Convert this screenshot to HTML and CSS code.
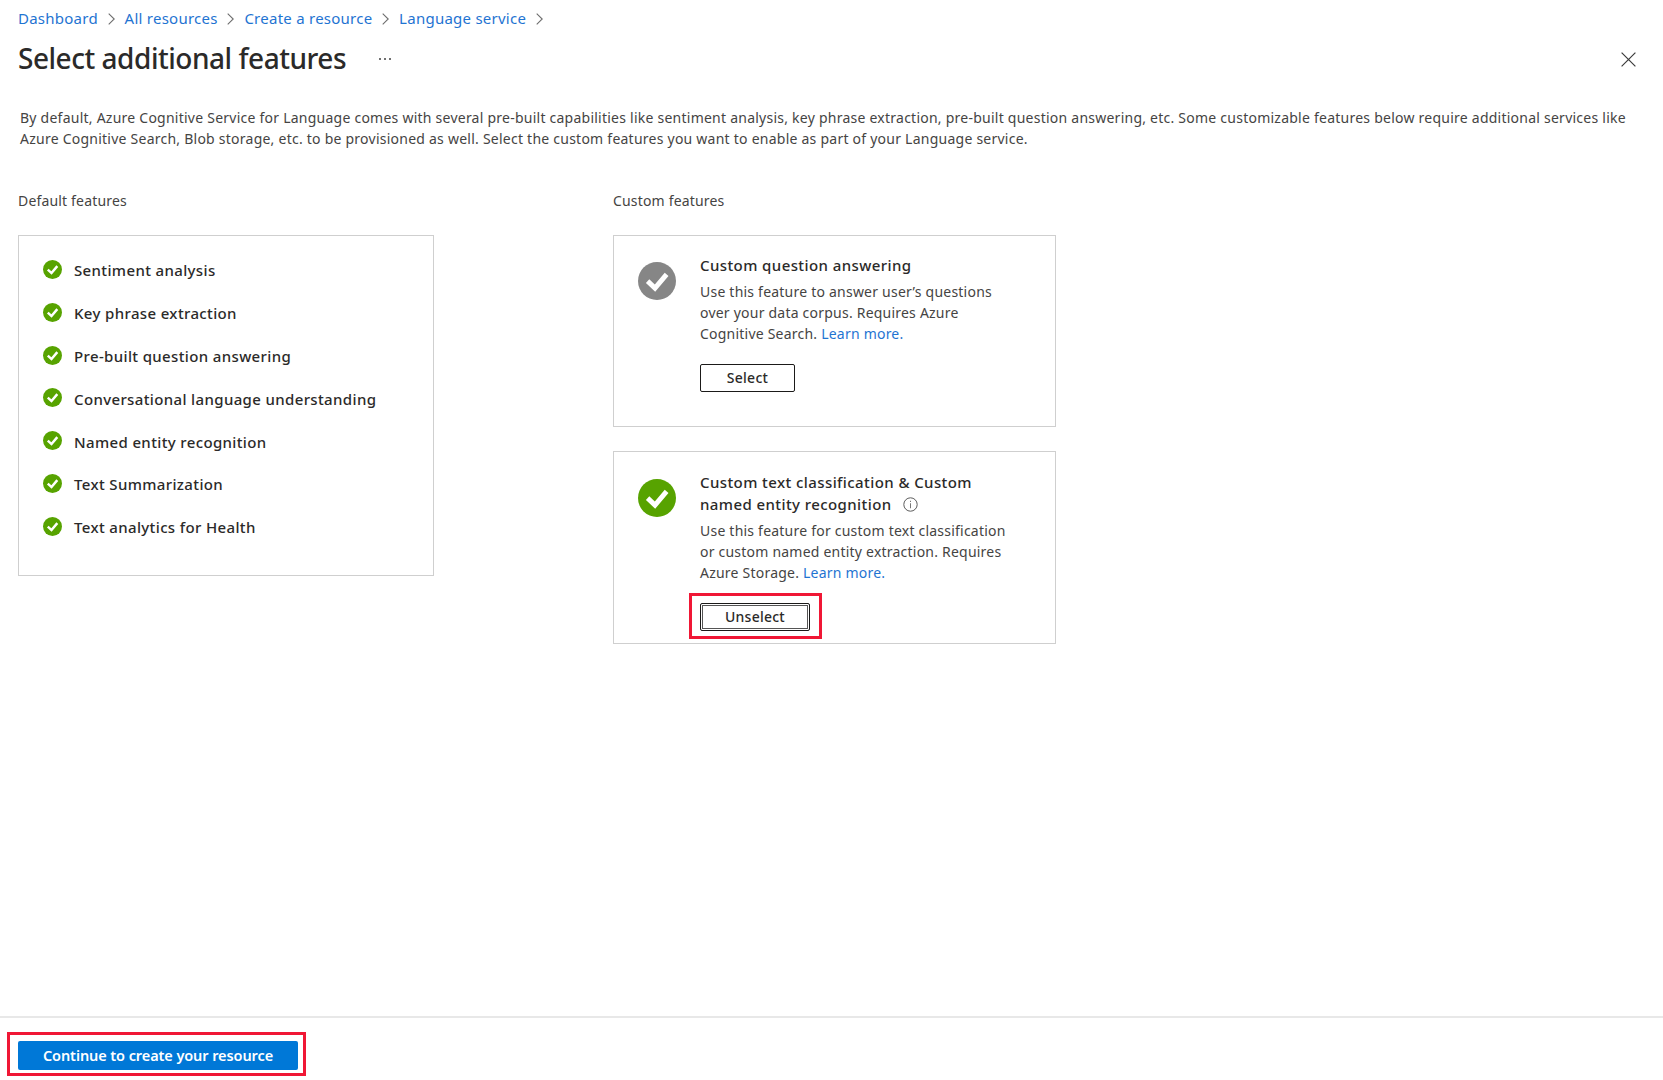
FILE: index.html
```
<!DOCTYPE html>
<html lang="en">
<head>
<meta charset="utf-8">
<title>Select additional features</title>
<link rel="stylesheet" href="styles.css">
</head>
<body>
<svg class="sprite" aria-hidden="true">
  <symbol id="check" viewBox="0 0 38 38"><circle cx="19" cy="19" r="19"/><path d="M9.6 19.1 17 26.1 28.6 12.3" fill="none" stroke="#fff" stroke-width="4.9"/></symbol>
  <symbol id="chevron" viewBox="0 0 7 12"><path d="M.7.6 6.2 6 .7 11.4" fill="none" stroke="#6e6e6e" stroke-width="1.1"/></symbol>
</svg>
<div class="page">
  <nav class="breadcrumb">
    <a>Dashboard</a><svg class="chevron"><use href="#chevron"/></svg>
    <a>All resources</a><svg class="chevron"><use href="#chevron"/></svg>
    <a>Create a resource</a><svg class="chevron"><use href="#chevron"/></svg>
    <a>Language service</a><svg class="chevron"><use href="#chevron"/></svg>
  </nav>
  <header class="header">
    <h1 class="title">Select additional features</h1>
    <svg class="more" viewBox="0 0 14 4"><path d="M1 1h2v2H1zM6 1h2v2H6zM11 1h2v2h-2z" fill="#707070"/></svg>
    <svg class="close" viewBox="0 0 15 15"><path d="M.6.6 14.4 14.4M14.4.6.6 14.4" stroke="#3c3c3c" stroke-width="1.2"/></svg>
  </header>
  <p class="intro">By default, Azure Cognitive Service for Language comes with several pre-built capabilities like sentiment analysis, key phrase extraction, pre-built question answering, etc. Some customizable features below require additional services like<br>Azure Cognitive Search, Blob storage, etc. to be provisioned as well. Select the custom features you want to enable as part of your Language service.</p>
  <main class="columns">
    <section class="defaults">
      <h2 class="label">Default features</h2>
      <ul class="list">
        <li><svg class="tick"><use href="#check"/></svg><span>Sentiment analysis</span></li>
        <li><svg class="tick"><use href="#check"/></svg><span>Key phrase extraction</span></li>
        <li><svg class="tick"><use href="#check"/></svg><span>Pre-built question answering</span></li>
        <li><svg class="tick"><use href="#check"/></svg><span>Conversational language understanding</span></li>
        <li><svg class="tick"><use href="#check"/></svg><span>Named entity recognition</span></li>
        <li><svg class="tick"><use href="#check"/></svg><span>Text Summarization</span></li>
        <li><svg class="tick"><use href="#check"/></svg><span>Text analytics for Health</span></li>
      </ul>
    </section>
    <section class="customs">
      <h2 class="label">Custom features</h2>
      <article class="card">
        <svg class="badge badge-off"><use href="#check"/></svg>
        <div>
          <h3 class="card-title">Custom question answering</h3>
          <p class="card-text">Use this feature to answer user’s questions<br>over your data corpus. Requires Azure<br>Cognitive Search. <a>Learn more.</a></p>
          <button class="button">Select</button>
        </div>
      </article>
      <article class="card">
        <svg class="badge"><use href="#check"/></svg>
        <div>
          <h3 class="card-title">Custom text classification &amp; Custom<br>named entity recognition<svg class="info" viewBox="0 0 15 15"><circle cx="7.5" cy="7.5" r="6.7" fill="none" stroke="#5c5c5c"/><path d="M7 6.2h1v5H7zM7 3.8h1v1.2H7z" fill="#777"/></svg></h3>
          <p class="card-text">Use this feature for custom text classification<br>or custom named entity extraction. Requires<br>Azure Storage. <a>Learn more.</a></p>
          <div class="highlight highlight-card"><button class="button button-focus">Unselect</button></div>
        </div>
      </article>
    </section>
  </main>
  <footer class="footer">
    <div class="highlight highlight-footer"><button class="primary">Continue to create your resource</button></div>
  </footer>
</div>
</body>
</html>
```
FILE: styles.css
```
* { box-sizing: border-box; }
body, h1, h2, h3, p, ul { margin: 0; padding: 0; }
body {
  background: #fff;
  color: #454443;
  font: 400 14px/21px "Noto Sans", "Open Sans", sans-serif;
}
svg { display: block; flex: none; }
a { color: #1f74d2; }
.sprite { position: absolute; width: 0; height: 0; }
.page { display: flex; flex-direction: column; height: 1080px; overflow: hidden; }

.breadcrumb {
  display: flex;
  align-items: center;
  height: 36px;
  padding-left: 18px;
  font-size: 15px;
  letter-spacing: .25px;
}
.chevron { width: 7px; height: 12px; margin: 2px 10px 0 9.7px; }
.breadcrumb a { white-space: nowrap; }

.header { display: flex; align-items: center; height: 43px; padding: 1px 27px 0 18px; }
.title {
  padding-bottom: 1px;
  color: #2b2a29;
  font-size: 28px;
  font-weight: 500;
  line-height: 40px;
  letter-spacing: -.47px;
  white-space: nowrap;
}
.more { width: 14px; height: 4px; margin: 2px auto 0 31.5px; }
.close { width: 15px; height: 15px; margin-top: 2px; }

.intro {
  margin: 28px 0 0 20px;
  letter-spacing: .241px;
  white-space: nowrap;
}

.columns { display: flex; gap: 179px; flex: 1; padding: 41px 0 0 18px; }
.label { height: 45px; font-size: 14px; font-weight: 400; letter-spacing: .17px; }
.defaults { width: 416px; }
.customs { width: 443px; }

.list {
  height: 341px;
  padding: 12px 0 0 24px;
  border: 1px solid #cfcfcf;
  list-style: none;
}
.list li {
  display: flex;
  align-items: center;
  gap: 12px;
  height: 42.85px;
  color: #2b2a29;
  font-size: 15px;
  font-weight: 500;
  letter-spacing: .36px;
}
.list span { padding-top: 2.5px; }
.tick { width: 19px; height: 19px; fill: #57a300; }

.card {
  display: flex;
  gap: 24px;
  height: 192px;
  padding: 18px 0 0 24px;
  border: 1px solid #cfcfcf;
}
.card + .card { height: 193px; margin-top: 24px; padding-top: 19px; }
.badge { width: 38px; height: 38px; margin-top: 8px; fill: #57a300; }
.badge-off { fill: #868686; }
.card-title {
  margin-bottom: 5px;
  color: #2b2a29;
  font-size: 15px;
  font-weight: 500;
  line-height: 22px;
  letter-spacing: .41px;
  white-space: nowrap;
}
.info { display: inline-block; width: 15px; height: 15px; margin-left: 11px; vertical-align: -2px; }
.card-text { letter-spacing: .22px; white-space: nowrap; }

.button {
  width: 95px;
  height: 28px;
  padding: 0;
  border: 1px solid #1b1a19;
  border-radius: 2px;
  background: #fff;
  color: #2b2a29;
  font: 500 14px/20px "Noto Sans", "Open Sans", sans-serif;
  letter-spacing: .25px;
}
.card-text + .button { display: block; margin-top: 20px; }
.button-focus {
  width: 110px;
  box-shadow: inset 0 0 0 1px #fff, inset 0 0 0 2px #555;
}
.highlight { display: flex; align-items: center; border: 3px solid #f01735; }
.highlight-card { width: 133px; height: 46px; margin: 10px 0 0 -11px; padding: 2px 0 0 8px; }

.footer { height: 64px; padding: 14px 0 0 7px; border-top: 2px solid #e8e8e8; }
.highlight-footer { width: 299px; height: 44px; padding: 2px 0 0 8px; }
.primary {
  width: 280px;
  height: 29px;
  padding: 0 0 1px;
  border: 0;
  border-radius: 2px;
  background: #0078d7;
  color: #fff;
  font: 600 14.5px/20px "Noto Sans", "Open Sans", sans-serif;
  letter-spacing: -.09px;
}
```
